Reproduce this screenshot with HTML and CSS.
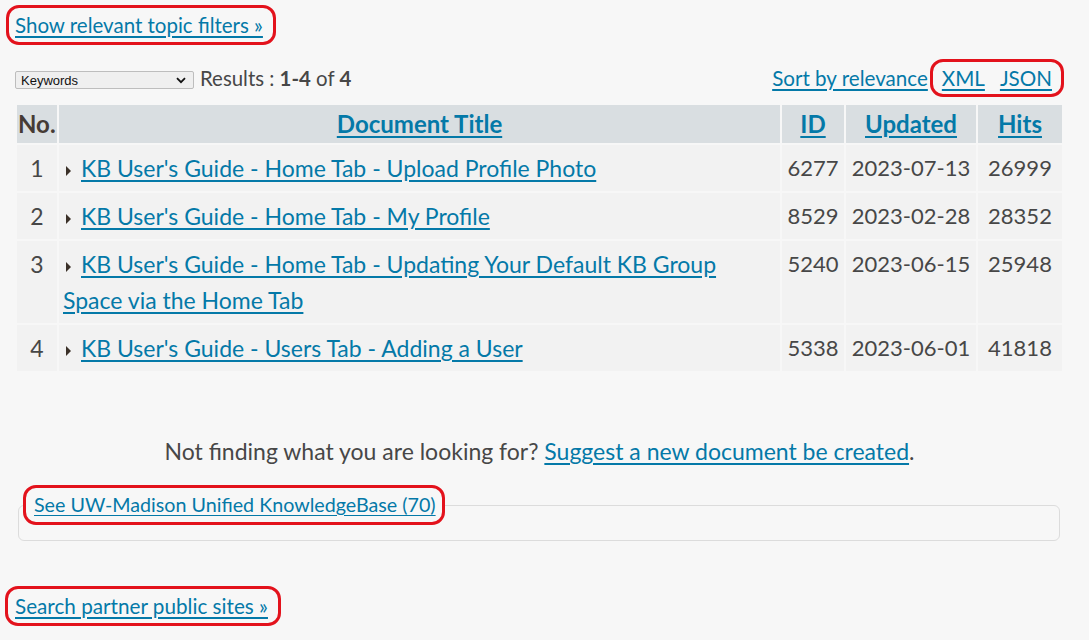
FILE: index.html
```html
<!DOCTYPE html>
<html lang="en">
<head>
<meta charset="utf-8">
<title>KB Search Results</title>
<link rel="stylesheet" href="styles.css">
</head>
<body>
<div class="page">
  <div class="topic">
    <span class="mark mark-topic"><a href="#">Show relevant topic filters &raquo;</a></span>
  </div>

  <div class="toolbar">
    <div class="toolbar-left">
      <span class="select">
        <span class="select-text">Keywords</span>
        <svg class="chev" width="10" height="7" viewBox="0 0 10 7"><path d="M1 1.2 L5 5.2 L9 1.2" fill="none" stroke="#111" stroke-width="1.8"/></svg>
      </span>
      <span class="results">Results : <b>1-4</b> of <b>4</b></span>
    </div>
    <div class="toolbar-right">
      <a href="#" class="sort">Sort by relevance</a>
      <span class="mark mark-fmt"><a href="#">XML</a><a href="#">JSON</a></span>
    </div>
  </div>

  <table class="results-table">
    <colgroup>
      <col class="w-no">
      <col class="w-title">
      <col class="w-id">
      <col class="w-upd">
      <col class="w-hits">
    </colgroup>
    <thead>
      <tr>
        <th class="c-no">No.</th>
        <th class="c-title"><a href="#">Document Title</a></th>
        <th class="c-id"><a href="#">ID</a></th>
        <th class="c-upd"><a href="#">Updated</a></th>
        <th class="c-hits"><a href="#">Hits</a></th>
      </tr>
    </thead>
    <tbody>
      <tr>
        <td class="c-no">1</td>
        <td class="c-title"><span class="tri"></span><a href="#">KB User's Guide - Home Tab - Upload Profile Photo</a></td>
        <td class="c-id">6277</td>
        <td class="c-upd">2023-07-13</td>
        <td class="c-hits">26999</td>
      </tr>
      <tr>
        <td class="c-no">2</td>
        <td class="c-title"><span class="tri"></span><a href="#">KB User's Guide - Home Tab - My Profile</a></td>
        <td class="c-id">8529</td>
        <td class="c-upd">2023-02-28</td>
        <td class="c-hits">28352</td>
      </tr>
      <tr>
        <td class="c-no">3</td>
        <td class="c-title"><span class="tri"></span><a href="#">KB User's Guide - Home Tab - Updating Your Default KB Group Space via the Home Tab</a></td>
        <td class="c-id">5240</td>
        <td class="c-upd">2023-06-15</td>
        <td class="c-hits">25948</td>
      </tr>
      <tr>
        <td class="c-no">4</td>
        <td class="c-title"><span class="tri"></span><a href="#">KB User's Guide - Users Tab - Adding a User</a></td>
        <td class="c-id">5338</td>
        <td class="c-upd">2023-06-01</td>
        <td class="c-hits">41818</td>
      </tr>
    </tbody>
  </table>

  <p class="notfound">Not finding what you are looking for? <a href="#">Suggest a new document be created</a>.</p>

  <fieldset class="unified">
    <legend><span class="mark mark-legend"><a href="#">See UW-Madison Unified KnowledgeBase (70)</a></span></legend>
  </fieldset>

  <div class="partner">
    <span class="mark mark-partner"><a href="#">Search partner public sites &raquo;</a></span>
  </div>
</div>
</body>
</html>
```

FILE: styles.css
```css
html, body {
  margin: 0;
  padding: 0;
  background: #f7f7f7;
}
body {
  font-family: Lato, "Noto Sans", sans-serif;
  color: #474747;
  font-size: 23px;
}
a {
  color: #0479a8;
  text-decoration: underline;
  text-underline-offset: 3px;
}
.page {
  padding: 0 25px 0 15px;
}
.mark {
  display: inline-block;
  border: 3px solid #e3121c;
  border-radius: 13px;
}
.topic {
  padding-top: 5px;
  height: 40px;
  font-size: 20.5px;
}
.mark-topic {
  margin-left: -9px;
  padding: 3px 10px 3px 6px;
  line-height: 28px;
}
.toolbar {
  margin-top: 15px;
  display: flex;
  justify-content: space-between;
  align-items: center;
  height: 38px;
}
.toolbar-left {
  display: flex;
  align-items: center;
  gap: 6px;
}
.select {
  display: inline-flex;
  align-items: center;
  justify-content: space-between;
  box-sizing: border-box;
  width: 179px;
  height: 18px;
  background: #efefef;
  border: 1px solid #bdbdbd;
  border-radius: 2px;
  padding: 0 5px;
  font-family: "Liberation Sans", Arial, sans-serif;
  font-size: 13px;
  color: #111;
  margin-top: 2px;
}
.chev { margin-right: 2px; }
.results {
  font-size: 20.4px;
  margin-top: -2px;
}
.results b { font-weight: 700; }
.toolbar-right {
  display: flex;
  align-items: center;
  font-size: 20.6px;
  margin-right: 0;
  margin-top: -2px;
}
.sort { margin-right: 2px; }
.mark-fmt {
  padding: 3px 9px 3px 9px;
  line-height: 26px;
  display: inline-flex;
  gap: 15px;
}
.results-table {
  width: 100%;
  table-layout: fixed;
  margin-top: 5px;
  border-collapse: separate;
  border-spacing: 2px;
}
.w-no { width: 40px; }
.w-id { width: 62px; }
.w-upd { width: 130px; }
.w-hits { width: 84px; }
.results-table th {
  background: #d9dee1;
  height: 38px;
  padding: 0 2px;
  font-weight: 700;
  font-size: 24px;
  color: #463b35;
  line-height: 26px;
  white-space: nowrap;
}
.results-table th.c-no { text-align: left; padding: 0 1px; }
.results-table td {
  background: #f2f2f2;
  padding: 5px 4px;
  line-height: 36px;
  vertical-align: top;
}
.results-table td.c-no { text-align: center; }
.results-table td.c-id,
.results-table td.c-upd,
.results-table td.c-hits {
  padding: 5px 2px;
  text-align: center;
  font-size: 22px;
  white-space: nowrap;
}
.tri {
  display: inline-block;
  width: 0;
  height: 0;
  border-top: 5px solid transparent;
  border-bottom: 5px solid transparent;
  border-left: 5px solid #3b3129;
  margin: 0 10px 0 3px;
  vertical-align: 1px;
}
.notfound {
  text-align: center;
  margin: 63px 0 0 0;
  line-height: 30px;
}
.unified {
  margin: 19px 4px 0 3px;
  border: 1px solid #dcdcdc;
  border-radius: 6px;
  padding: 0 0 15px 0;
  height: 0;
}
.unified legend {
  padding: 0;
  margin-left: 4px;
  font-size: 19.7px;
}
.mark-legend {
  padding: 3px 6px 3px 8px;
  line-height: 28px;
}
.partner {
  margin-top: 45px;
  font-size: 20.7px;
}
.mark-partner {
  margin-left: -10px;
  padding: 3px 10px 3px 7px;
  line-height: 28px;
}
```
